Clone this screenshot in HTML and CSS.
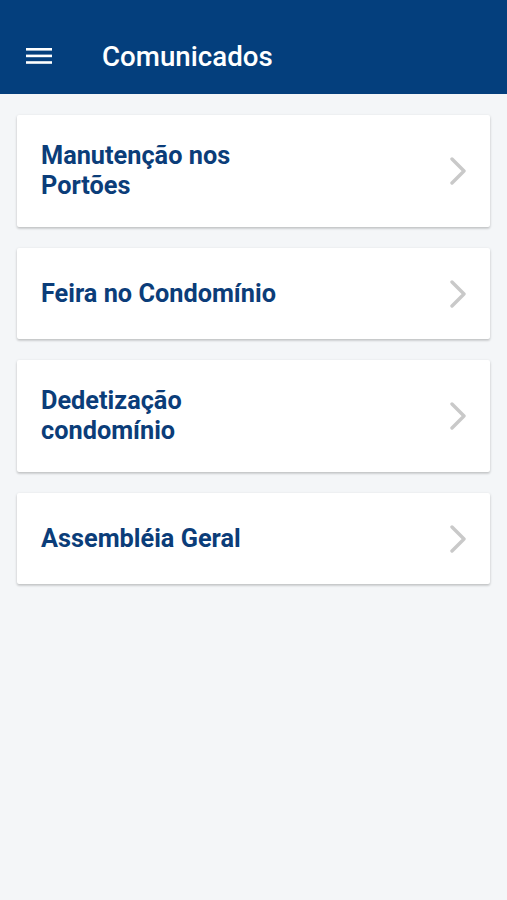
FILE: index.html
```html
<!DOCTYPE html>
<html lang="pt-BR">
<head>
    <meta charset="UTF-8">
    <meta name="viewport" content="width=device-width, initial-scale=1.0">
    <link rel="stylesheet" href="styles.css">
</head>
<body>
    <header class="topbar">
        <button class="menu-btn" aria-label="Menu">
            <svg width="26" height="18" viewBox="0 0 26 18">
                <rect x="0" y="1" width="26" height="2.6" fill="#fff"/>
                <rect x="0" y="7.6" width="26" height="2.6" fill="#fff"/>
                <rect x="0" y="14.2" width="26" height="2.6" fill="#fff"/>
            </svg>
        </button>
        <h1>Comunicados</h1>
    </header>

    <main class="list">
        <a class="card" href="#">
            <span class="card-title">Manutenção nos Portões</span>
            <svg class="chevron" width="18" height="28" viewBox="0 0 18 28">
                <polyline points="3,2 15,14 3,26" fill="none" stroke="#c9c9c9" stroke-width="3.4" stroke-linecap="round" stroke-linejoin="round"/>
            </svg>
        </a>
        <a class="card" href="#">
            <span class="card-title">Feira no Condomínio</span>
            <svg class="chevron" width="18" height="28" viewBox="0 0 18 28">
                <polyline points="3,2 15,14 3,26" fill="none" stroke="#c9c9c9" stroke-width="3.4" stroke-linecap="round" stroke-linejoin="round"/>
            </svg>
        </a>
        <a class="card" href="#">
            <span class="card-title">Dedetização condomínio</span>
            <svg class="chevron" width="18" height="28" viewBox="0 0 18 28">
                <polyline points="3,2 15,14 3,26" fill="none" stroke="#c9c9c9" stroke-width="3.4" stroke-linecap="round" stroke-linejoin="round"/>
            </svg>
        </a>
        <a class="card" href="#">
            <span class="card-title">Assembléia Geral</span>
            <svg class="chevron" width="18" height="28" viewBox="0 0 18 28">
                <polyline points="3,2 15,14 3,26" fill="none" stroke="#c9c9c9" stroke-width="3.4" stroke-linecap="round" stroke-linejoin="round"/>
            </svg>
        </a>
    </main>
</body>
</html>
```

FILE: styles.css
```css
body {
    margin: 0;
    font-family: Roboto, "Liberation Sans", Arial, sans-serif;
    background-color: #f4f6f8;
    min-height: 900px;
}
.topbar {
    display: flex;
    align-items: center;
    height: 94px;
    padding: 18px 0 0 26px;
    box-sizing: border-box;
    background-color: #043f7d;
    color: white;
}
.menu-btn {
    display: flex;
    padding: 0;
    border: none;
    background: none;
    cursor: pointer;
}
.topbar h1 {
    margin: 0 0 0 50px;
    font-size: 27.7px;
    font-weight: 500;
}
.list {
    display: flex;
    flex-direction: column;
    gap: 21px;
    padding: 21px 17px;
}
.card {
    display: flex;
    align-items: center;
    justify-content: space-between;
    min-height: 91px;
    padding: 26px 23px 26px 24px;
    box-sizing: border-box;
    background-color: white;
    border-radius: 2px;
    box-shadow: 0 1px 3px rgba(0,0,0,0.18), 0 2px 2px rgba(0,0,0,0.08);
    text-decoration: none;
}
.card-title {
    max-width: 255px;
    font-size: 25.3px;
    line-height: 30px;
    font-weight: 700;
    color: #0b3d79;
}
.chevron {
    flex-shrink: 0;
}
```
